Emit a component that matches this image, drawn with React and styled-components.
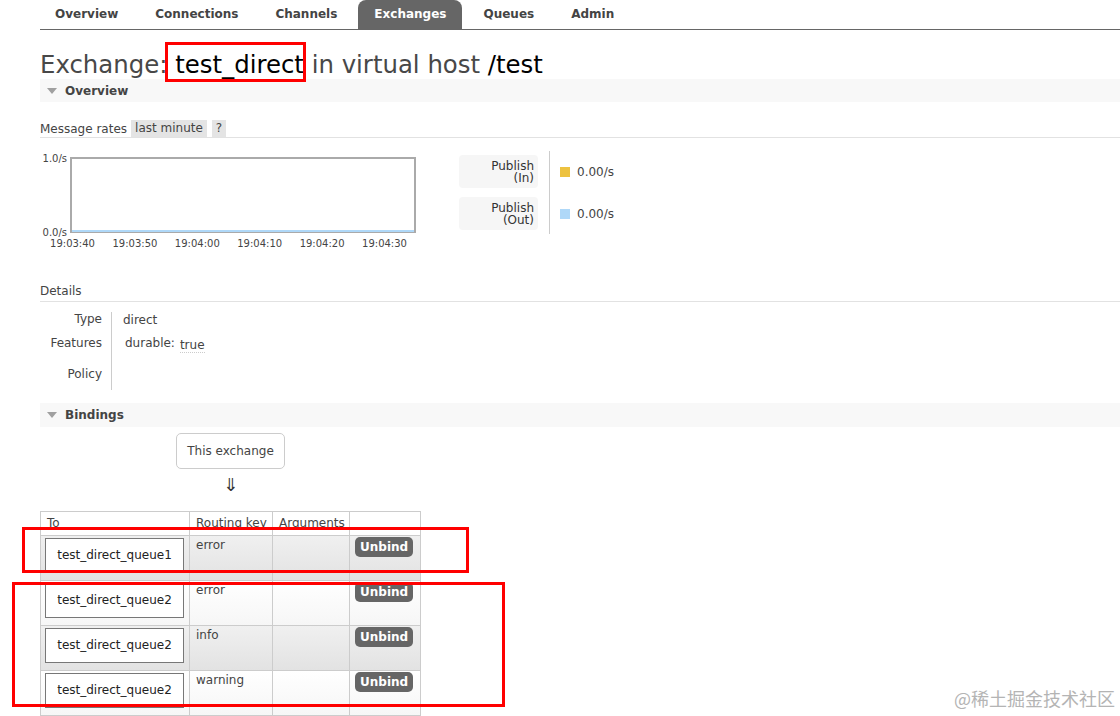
import React from 'react';
import styled, { createGlobalStyle } from 'styled-components';

const GlobalStyle = createGlobalStyle`
  html, body {
    margin: 0;
    padding: 0;
    background: #fff;
    overflow: hidden;
  }
  body {
    font-family: "DejaVu Sans", Verdana, sans-serif;
    font-size: 12px;
    color: #444;
  }
`;

const Page = styled.div`
  position: relative;
  width: 1120px;
  height: 716px;
  padding-left: 40px;
  box-sizing: border-box;
  overflow: hidden;
`;

const Nav = styled.ul`
  display: flex;
  list-style: none;
  margin: 0;
  padding: 0;
  height: 29px;
  border-bottom: 1px solid #666;
`;

const Tab = styled.li`
  padding: 0 16px;
  margin-right: 5px;
  line-height: 29px;
  font-weight: bold;
  color: ${p => (p.$active ? '#fff' : '#444')};
  background: ${p => (p.$active ? '#666' : 'transparent')};
  border-radius: 8px 8px 0 0;
  &:first-child {
    padding-left: 15px;
  }
`;

const Title = styled.h1`
  margin: 20px 0 0;
  height: 29px;
  font-size: 24.4px;
  font-weight: normal;
  line-height: 29px;
  color: #484848;
  white-space: nowrap;
`;

const Dark = styled.span`
  color: #000;
`;

const SectionHeader = styled.div`
  display: flex;
  align-items: center;
  gap: 8px;
  height: ${p => p.$h || 23}px;
  margin-top: ${p => p.$mt || 0}px;
  padding-left: 7px;
  background: #f8f8f8;
  font-weight: bold;
  color: #444;
`;

const Caret = styled.span`
  width: 0;
  height: 0;
  border-left: 5px solid transparent;
  border-right: 5px solid transparent;
  border-top: 6px solid #a0a0a0;
`;

const RatesBar = styled.div`
  display: flex;
  align-items: center;
  height: 17px;
  margin-top: 18px;
  border-bottom: 1px solid #e2e2e2;
`;

const Pill = styled.span`
  margin-left: ${p => p.$gap}px;
  padding: 0 4px;
  line-height: 17px;
  background: #e4e4e4;
`;

const ChartRow = styled.div`
  display: flex;
  align-items: flex-start;
  margin-top: 12px;
`;

const Legend = styled.div`
  display: flex;
  margin-left: 39px;
  margin-top: 1px;
`;

const LegendLabels = styled.div`
  display: flex;
  flex-direction: column;
  gap: 9px;
  padding: 4px 11px 4px 0;
`;

const LegendLabel = styled.div`
  width: 79px;
  height: 33px;
  box-sizing: border-box;
  padding-right: 4px;
  display: flex;
  flex-direction: column;
  justify-content: center;
  text-align: right;
  line-height: 12px;
  color: #333;
  background: #f6f6f6;
  border-radius: 4px;
`;

const LegendValues = styled.div`
  display: flex;
  flex-direction: column;
  gap: 9px;
  padding: 4px 0 4px 10px;
  border-left: 1px solid #ccc;
`;

const LegendValue = styled.div`
  display: flex;
  align-items: center;
  gap: 7px;
  height: 33px;
`;

const Swatch = styled.span`
  width: 10px;
  height: 10px;
  background: ${p => p.$color};
`;

const SubHeading = styled.div`
  margin-top: 34px;
  padding-bottom: 2px;
  line-height: 15px;
  border-bottom: 1px solid #e2e2e2;
`;

const Facts = styled.div`
  display: grid;
  grid-template-columns: 72px auto;
  grid-template-rows: 24px 31px 23px;
  margin-top: 10px;
  line-height: 15px;
`;

const FactLabel = styled.div`
  padding-right: 9px;
  text-align: right;
  border-right: 1px solid #ccc;
`;

const FactValue = styled.div`
  padding: ${p => p.$top || 0}px 0 0 ${p => p.$left || 11}px;
`;

const Tag = styled.span`
  margin-left: 5px;
  position: relative;
  top: 2px;
  border-bottom: 1px dotted #ccc;
`;

const ExchangeBox = styled.div`
  width: 109px;
  height: 36px;
  box-sizing: border-box;
  margin: 6px 0 0 136px;
  display: flex;
  align-items: center;
  justify-content: center;
  border: 1px solid #ccc;
  border-radius: 5px;
`;

const Arrow = styled.div`
  width: 109px;
  height: 42px;
  margin-left: 136px;
  text-align: center;
  font-size: 18px;
  line-height: 32px;
  color: #333;
`;

const List = styled.table`
  width: 381px;
  table-layout: fixed;
  border-collapse: collapse;
`;

const Th = styled.th`
  height: 24px;
  padding: 4px 0 0 6px;
  box-sizing: border-box;
  text-align: left;
  vertical-align: top;
  white-space: nowrap;
  overflow: hidden;
  font-weight: normal;
  border: 1px solid #ccc;
  background: #fff;
`;

const Row = styled.tr`
  background: ${p =>
    p.$alt
      ? 'linear-gradient(to bottom, #f0f0f0, #e2e2e2)'
      : 'linear-gradient(to bottom, #ffffff, #f6f6f6)'};
`;

const Td = styled.td`
  height: 45px;
  box-sizing: border-box;
  padding: ${p => p.$pad || '2px 6px'};
  vertical-align: top;
  line-height: 15px;
  border: 1px solid #ccc;
`;

const QueueBox = styled.div`
  width: 139px;
  height: 35px;
  box-sizing: border-box;
  display: flex;
  align-items: center;
  justify-content: center;
  background: #fff;
  border: 1px solid #777;
  color: #222;
`;

const Unbind = styled.button`
  height: 20px;
  padding: 0 5px;
  border: 0;
  border-radius: 5px;
  background: #666;
  color: #fff;
  font-family: inherit;
  font-size: 12px;
  font-weight: bold;
`;

const Mark = styled.div`
  position: absolute;
  left: ${p => p.$x}px;
  top: ${p => p.$y}px;
  width: ${p => p.$w}px;
  height: ${p => p.$h}px;
  box-sizing: border-box;
  border: 3px solid #f00;
  pointer-events: none;
`;

const Watermark = styled.div`
  position: absolute;
  right: 5px;
  top: 685px;
  font-family: "Noto Sans CJK SC", sans-serif;
  font-size: 18px;
  color: #b4b4b4;
`;

const tabs = ['Overview', 'Connections', 'Channels', 'Exchanges', 'Queues', 'Admin'];
const ticks = ['19:03:40', '19:03:50', '19:04:00', '19:04:10', '19:04:20', '19:04:30'];
const bindings = [
  { queue: 'test_direct_queue1', key: 'error' },
  { queue: 'test_direct_queue2', key: 'error' },
  { queue: 'test_direct_queue2', key: 'info' },
  { queue: 'test_direct_queue2', key: 'warning' }
];

const RateChart = () => (
  <svg width="380" height="100" viewBox="0 0 380 100">
    <rect x="31" y="8" width="344" height="74" fill="#fff" stroke="#aaa" strokeWidth="2" />
    <line x1="32" y1="81" x2="374" y2="81" stroke="#afd8f8" strokeWidth="2" />
    <g fontFamily="DejaVu Sans, sans-serif" fontSize="10" fill="#444">
      <text x="27" y="12" textAnchor="end">1.0/s</text>
      <text x="27" y="86" textAnchor="end">0.0/s</text>
      {ticks.map((t, i) => (
        <text key={t} x={32.5 + i * 62.4} y="97" textAnchor="middle">{t}</text>
      ))}
    </g>
  </svg>
);

const App = () => (
  <Page>
    <GlobalStyle />
    <Nav>
      {tabs.map(t => (
        <Tab key={t} $active={t === 'Exchanges'}>{t}</Tab>
      ))}
    </Nav>

    <Title>
      Exchange: <Dark>test_direct</Dark> in virtual host <Dark>/test</Dark>
    </Title>

    <SectionHeader>
      <Caret />
      Overview
    </SectionHeader>

    <RatesBar>
      Message rates
      <Pill $gap={4}>last minute</Pill>
      <Pill $gap={5}>?</Pill>
    </RatesBar>

    <ChartRow>
      <RateChart />
      <Legend>
        <LegendLabels>
          <LegendLabel><span>Publish</span><span>(In)</span></LegendLabel>
          <LegendLabel><span>Publish</span><span>(Out)</span></LegendLabel>
        </LegendLabels>
        <LegendValues>
          <LegendValue><Swatch $color="#edc240" />0.00/s</LegendValue>
          <LegendValue><Swatch $color="#afd8f8" />0.00/s</LegendValue>
        </LegendValues>
      </Legend>
    </ChartRow>

    <SubHeading>Details</SubHeading>
    <Facts>
      <FactLabel>Type</FactLabel>
      <FactValue $top={1}>direct</FactValue>
      <FactLabel>Features</FactLabel>
      <FactValue $left={13}>durable:<Tag>true</Tag></FactValue>
      <FactLabel>Policy</FactLabel>
      <FactValue />
    </Facts>

    <SectionHeader $mt={13} $h={24}>
      <Caret />
      Bindings
    </SectionHeader>

    <ExchangeBox>This exchange</ExchangeBox>
    <Arrow>⇓</Arrow>

    <List>
      <colgroup>
        <col style={{ width: 149 }} />
        <col style={{ width: 83 }} />
        <col style={{ width: 77 }} />
        <col style={{ width: 71 }} />
      </colgroup>
      <thead>
        <tr>
          <Th>To</Th>
          <Th>Routing key</Th>
          <Th>Arguments</Th>
          <Th />
        </tr>
      </thead>
      <tbody>
        {bindings.map((b, i) => (
          <Row key={i} $alt={i % 2 === 0}>
            <Td $pad="2px 4px">
              <QueueBox>{b.queue}</QueueBox>
            </Td>
            <Td>{b.key}</Td>
            <Td />
            <Td $pad="1px 5px">
              <Unbind>Unbind</Unbind>
            </Td>
          </Row>
        ))}
      </tbody>
    </List>

    <Mark $x={165} $y={42} $w={141} $h={40} />
    <Mark $x={22} $y={527} $w={447} $h={46} />
    <Mark $x={12} $y={582} $w={493} $h={125} />
    <Watermark>@稀土掘金技术社区</Watermark>
  </Page>
);

export default App;
